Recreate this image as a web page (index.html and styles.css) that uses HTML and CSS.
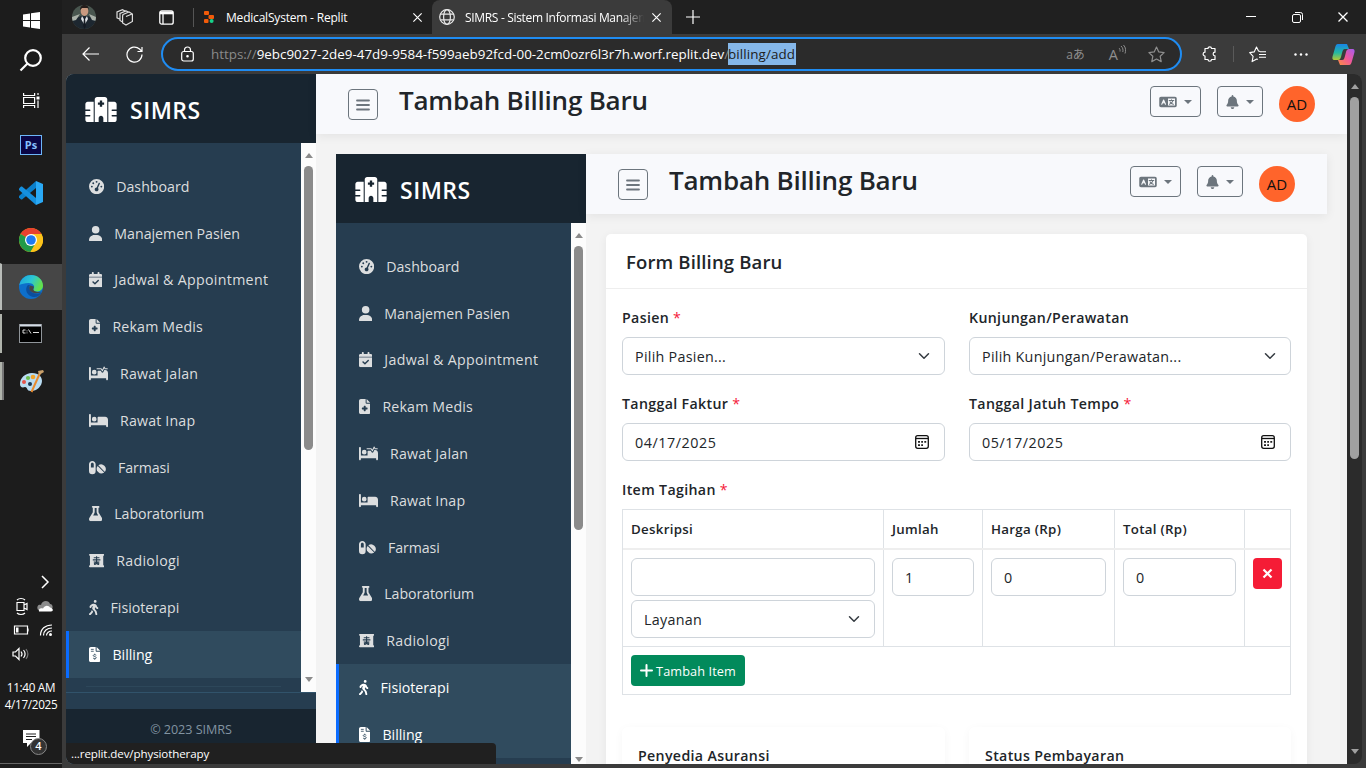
FILE: index.html
```html
<!DOCTYPE html>
<html lang="id">
<head>
<meta charset="utf-8">
<title>SIMRS - Sistem Informasi Manajemen</title>
<link rel="stylesheet" href="styles.css">
</head>
<body>
<svg class="sprite" aria-hidden="true">
  <symbol id="i-hospital" viewBox="0 0 640 512"><path fill-rule="evenodd" d="M192 48c0-26 22-48 48-48h160c26 0 48 22 48 48v464h-80v-80c0-26-22-48-48-48s-48 22-48 48v80h-80zM296 72v40h-40v48h40v40h48v-40h40v-48h-40V72zM48 96h122v416H48c-26 0-48-22-48-48v-64h88c22 0 22-32 0-32H0v-80h88c22 0 22-32 0-32H0V144c0-26 22-48 48-48zM470 96h122c26 0 48 22 48 48v112h-88c-22 0-22 32 0 32h88v80h-88c-22 0-22 32 0 32h88v64c0 26-22 48-48 48H470z"/></symbol>
  <symbol id="i-gauge" viewBox="0 0 512 512"><path fill-rule="evenodd" d="M0 256a256 256 0 1 1 512 0A256 256 0 1 1 0 256zM288 96a32 32 0 1 0 -64 0 32 32 0 1 0 64 0zM256 416c35.300 0 64-28.700 64-64c0-17.400-6.900-33.100-18.100-44.600L366 161.700c5.300-12.100-.2-26.300-12.300-31.600s-26.300 .2-31.600 12.300L257.900 288c-.6 0-1.300 0-1.900 0c-35.300 0-64 28.700-64 64s28.700 64 64 64zM176 144a32 32 0 1 0 -64 0 32 32 0 1 0 64 0zM96 288a32 32 0 1 0 0-64 32 32 0 1 0 0 64zm352-32a32 32 0 1 0 -64 0 32 32 0 1 0 64 0z"/></symbol>
  <symbol id="i-user" viewBox="0 0 448 512"><path d="M224 256A128 128 0 1 0 224 0a128 128 0 1 0 0 256zm-45.700 48C79.800 304 0 383.800 0 482.300C0 498.700 13.300 512 29.700 512H418.300c16.400 0 29.700-13.300 29.700-29.700C448 383.800 368.200 304 269.700 304H178.300z"/></symbol>
  <symbol id="i-calendar" viewBox="0 0 448 512"><path fill-rule="evenodd" d="M128 0c17.700 0 32 14.300 32 32V64H288V32c0-17.700 14.300-32 32-32s32 14.300 32 32V64h48c26.500 0 48 21.500 48 48v48H0V112C0 85.500 21.500 64 48 64H96V32c0-17.700 14.300-32 32-32zM0 192H448V464c0 26.500-21.500 48-48 48H48c-26.500 0-48-21.500-48-48V192zM329 305c9.400-9.400 9.400-24.600 0-33.900s-24.600-9.400-33.900 0l-95 95-47-47c-9.400-9.400-24.600-9.400-33.900 0s-9.400 24.600 0 33.900l64 64c9.400 9.400 24.600 9.400 33.900 0L329 305z"/><path d="M0 160h448v32H0z" opacity=".6"/></symbol>
  <symbol id="i-file" viewBox="0 0 384 512"><path fill-rule="evenodd" d="M64 0C28.700 0 0 28.700 0 64V448c0 35.300 28.700 64 64 64H320c35.300 0 64-28.700 64-64V160H256c-17.700 0-32-14.300-32-32V0H64zM256 0V128H384L256 0zM160 240c0-8.800 7.200-16 16-16h32c8.800 0 16 7.200 16 16v48h48c8.800 0 16 7.200 16 16v32c0 8.800-7.200 16-16 16H224v48c0 8.800-7.200 16-16 16H176c-8.800 0-16-7.200-16-16V352H112c-8.800 0-16-7.200-16-16V304c0-8.800 7.200-16 16-16h48V240z"/></symbol>
  <symbol id="i-bedpulse" viewBox="0 0 640 512"><path d="M32 32c18 0 32 14 32 32v256h224V180c0-12 10-20 22-20h90l26 48c10 20 42 22 54 0l38-72h26c53 0 96 43 96 96v216c0 18-14 32-32 32s-32-14-32-32v-32H64v32c0 18-14 32-32 32S0 466 0 448V64c0-18 14-32 32-32zm144 96a80 80 0 1 1 0 160 80 80 0 0 1 0-160z"/><path d="M270 96h140l42 64 58-124 30 60h76" fill="none" stroke="currentColor" stroke-width="34" stroke-linejoin="round" stroke-linecap="round"/></symbol>
  <symbol id="i-bed" viewBox="0 0 640 512"><path d="M32 32c17.700 0 32 14.300 32 32V320H288V160c0-17.700 14.300-32 32-32H544c53 0 96 43 96 96V448c0 17.700-14.300 32-32 32s-32-14.300-32-32V416H352 320 64v32c0 17.700-14.300 32-32 32s-32-14.300-32-32V64C0 46.300 14.300 32 32 32zm144 96a80 80 0 1 1 0 160 80 80 0 1 1 0-160z"/></symbol>
  <symbol id="i-pills" viewBox="0 0 576 512"><path fill-rule="evenodd" d="M112 32c62 0 112 50 112 112v224a112 112 0 0 1-224 0V144C0 82 50 32 112 32zm0 64c-27 0-48 21-48 48v112h96V144c0-27-21-48-48-48z"/><path d="M300 213c-5-5-13-5-17 1a160 160 0 0 0 219 219c6-4 6-12 1-17zM325 172c-6 4-6 12-1 17l203 203c5 5 13 4 17-2a160 160 0 0 0-219-218z"/></symbol>
  <symbol id="i-flask" viewBox="0 0 448 512"><path fill-rule="evenodd" d="M288 0H160 128C110.300 0 96 14.300 96 32s14.300 32 32 32V196.800c0 11.800-3.300 23.500-9.500 33.500L10.300 406.200C3.600 417.200 0 429.700 0 442.600C0 480.900 31.100 512 69.400 512H378.600c38.300 0 69.400-31.100 69.400-69.400c0-12.800-3.600-25.400-10.300-36.400L329.500 230.400c-6.200-10.100-9.500-21.700-9.500-33.500V64c17.700 0 32-14.300 32-32s-14.300-32-32-32H288zM192 196.800V64h64V196.800c0 23.700 6.600 46.900 19 67.100L309.500 320h-171L173 263.900c12.400-20.200 19-43.400 19-67.100z"/></symbol>
  <symbol id="i-xray" viewBox="0 0 512 512"><path d="M32 32h448c43 0 43 64 0 64v320c43 0 43 64 0 64H32c-43 0-43-64 0-64V96c-43 0-43-64 0-64z"/><path class="cut" d="M256 112v256M160 160h192M128 232h256M160 304h192M180 364c0-34 40-34 76-12 36-22 76-22 76 12 0 30-40 28-76-10-36 38-76 40-76 10z"/></symbol>
  <symbol id="i-walk" viewBox="0 0 320 512"><path d="M160 48a48 48 0 1 1 96 0 48 48 0 1 1 -96 0zM126.500 199.300c-1 .4-1.900 .8-2.900 1.200l-8 3.500c-16.400 7.300-29 21.200-34.700 38.200l-2.600 7.800c-5.600 16.800-23.700 25.800-40.500 20.200s-25.800-23.700-20.200-40.500l2.600-7.800c11.400-34.100 36.600-61.900 69.400-76.500l8-3.500c20.800-9.200 43.300-14 66.100-14c44.600 0 84.800 26.800 101.900 67.900L281 232.700l21.400 10.700c15.800 7.900 22.200 27.100 14.300 42.900s-27.100 22.200-42.900 14.300L247 287.300c-10.300-5.200-18.400-13.800-22.800-24.500l-9.600-23-19.300 65.500 49.500 54c5.400 5.900 9.200 13 11.200 20.800l23 92.100c4.300 17.100-6.100 34.500-23.300 38.800s-34.500-6.100-38.800-23.300l-22-88.100-70.700-77.100c-14.800-16.100-20.300-38.600-14.700-59.700l16.900-63.500zM68.700 398l25-62.400c2.100 3 4.500 5.800 7 8.600l40.700 44.400-14.500 36.200c-2.400 6-6 11.500-10.600 16.100L54.600 502.600c-12.500 12.500-32.800 12.500-45.300 0s-12.500-32.800 0-45.300L68.700 398z"/></symbol>
  <symbol id="i-invoice" viewBox="0 0 384 512"><path d="M64 0C29 0 0 29 0 64v384c0 35 29 64 64 64h256c35 0 64-29 64-64V160H256c-18 0-32-14-32-32V0zm192 0v128h128z"/><path class="cut thin" d="M64 80h96M64 144h96M246 278c-44-26-104-20-104 12 0 46 104 22 104 70 0 38-60 42-108 14M192 226v38M192 396v34"/></symbol>
  <symbol id="i-bell" viewBox="0 0 448 512"><path d="M224 0c-17.700 0-32 14.300-32 32V51.200C119 66 64 130.600 64 208v18.800c0 47-17.300 92.400-48.500 127.600l-7.400 8.300c-8.400 9.400-10.400 22.900-5.300 34.400S19.400 416 32 416H416c12.600 0 24-7.400 29.200-18.900s3.100-25-5.300-34.400l-7.400-8.300C401.300 319.200 384 273.900 384 226.800V208c0-77.400-55-142-128-156.800V32c0-17.700-14.300-32-32-32zm45.300 493.300c12-12 18.700-28.300 18.700-45.300H224 160c0 17 6.700 33.300 18.700 45.300s28.300 18.700 45.300 18.700s33.300-6.700 45.300-18.700z"/></symbol>
  <symbol id="i-lang" viewBox="0 0 640 512"><path fill-rule="evenodd" d="M64 64h512c35 0 64 29 64 64v256c0 35-29 64-64 64H64c-35 0-64-29-64-64V128c0-35 29-64 64-64zm256 64v256h256V128z"/><path d="M92 336l68-152 68 152M120 282h80" fill="none" stroke="#f8f9fc" stroke-width="40" stroke-linecap="round" stroke-linejoin="round"/><path d="M364 198h168M448 170v26M506 200c-20 68-68 116-128 142M398 252c24 42 64 74 116 90" fill="none" stroke="currentColor" stroke-width="38" stroke-linecap="round"/></symbol>
  <symbol id="i-bars" viewBox="0 0 14 14"><path d="M1 2.500h12M1 7h12M1 11.500h12" fill="none" stroke="currentColor" stroke-width="1.800" stroke-linecap="round"/></symbol>
  <symbol id="i-date" viewBox="0 0 16 16"><rect x="1.700" y="1.700" width="12.600" height="12.600" rx="2" fill="none" stroke="#111" stroke-width="1.300"/><path d="M2 4.500h12" stroke="#111" stroke-width="1.300"/><path d="M4 7h2v1.800H4zM7.200 7H9v1.800H7.200zM10.300 7h1.900v1.800h-1.900zM4 10.200h2V12H4zM7.200 10.200H9V12H7.200z" fill="#222"/></symbol>
  <symbol id="i-chev" viewBox="0 0 16 16"><path d="M2 5l6 6 6-6" fill="none" stroke="#343a40" stroke-width="2" stroke-linecap="round" stroke-linejoin="round"/></symbol>
  <symbol id="i-x" viewBox="0 0 12 12"><path d="M1.500 1.500l9 9M10.500 1.500l-9 9" fill="none" stroke="currentColor" stroke-width="1.300"/></symbol>
</svg>

<div class="screen">
  <aside class="taskbar">
    <div class="tb short"><svg width="17" height="17" viewBox="0 0 17 17" fill="#fff"><path d="M0 2.500l7-1V8H0zM8 1.300L17 0v8H8zM0 9h7v6.500l-7-1zM8 9h9v8l-9-1.300z"/></svg></div>
    <div class="tb short"><svg width="24" height="24" viewBox="0 0 24 24" fill="none" stroke="#fff" stroke-width="2.200"><circle cx="14" cy="10" r="7.800"/><path d="M8.500 15.500L1.500 22.500"/></svg></div>
    <div class="tb mid"><svg width="17" height="17" viewBox="0 0 17 17" fill="none" stroke="#fff" stroke-width="1.200"><path d="M.6 1v2.500h11V1M.6 16v-2.500h11V16M.6 5.500h11v6H.6zM15 1v2M15 8.500V16"/><path d="M13.500 4.500h3v3h-3z" fill="#fff" stroke="none"/></svg></div>
    <div class="tb pstb"><span class="ps">Ps</span></div>
    <div class="tb"><svg width="26" height="26" viewBox="0 0 26 26"><path fill-rule="evenodd" d="M18 1l7 3v18l-7 3z" fill="#2aa9f5"/><path d="M18 1v7L4 19.500H3l-2-2V16z" fill="#0a7fcb"/><path d="M18 25v-7L4 6.500H3l-2 2V10z" fill="#1590df"/></svg></div>
    <div class="tb"><svg width="24" height="24" viewBox="0 0 24 24"><circle cx="12" cy="12" r="12" fill="#fbbc05"/><path d="M12 12L1.600 6A12 12 0 0 1 22.400 6z" fill="#e8412f"/><path d="M12 12L1.600 6A12 12 0 0 0 11.500 24l5.200-9z" fill="#219a4a"/><path d="M12 6h10.400A12 12 0 0 1 11.500 24l5.500-9z" fill="#fcc31b"/><circle cx="12" cy="12" r="6" fill="#fff"/><circle cx="12" cy="12" r="4.800" fill="#1f7af0"/></svg></div>
    <div class="tb active"><svg width="24" height="24" viewBox="0 0 24 24"><defs><linearGradient id="eg" x1="0" y1="0" x2="1" y2=".4"><stop offset="0" stop-color="#1aa0df"/><stop offset=".55" stop-color="#2cc7d4"/><stop offset="1" stop-color="#63e04c"/></linearGradient></defs><circle cx="12" cy="12" r="12" fill="#0d6fcb"/><path d="M.3 10C2 3 7 0 12 0c7 0 12 5 12 10.500 0 4-3 6-6.500 6-3 0-4-1-3-2.500 2-3-.5-6-5-6-4 0-7 1-9.200 2z" fill="url(#eg)"/><path d="M9 10c-4 4-1 11 5 12 4 .5 6-1 8.500-4.500-4 2-8.500 1.500-11-1.500C10 14 9.500 12 11 10z" fill="#0b4f9e"/><path d="M11 10.500c-2 3 0 6.500 4 7.500 3 .7 6 0 7.800-1.200-3 .5-7 .5-8.300-1.800-.7-1.500.7-2 .3-3.500z" fill="#454545"/></svg></div>
    <div class="tb open"><svg width="24" height="20" viewBox="0 0 24 20"><rect x=".5" y=".5" width="22" height="18" fill="#000" stroke="#8f9499"/><path d="M1 1.500h21" stroke="#d3dbe4" stroke-width="2"/><path d="M6.500 6H4v3h2.500M8 6.500v.8M8 8.500v.8M9.500 5.500L12 9.500M14 8.500h6" stroke="#ddd" fill="none"/></svg></div>
    <div class="tb open dual"><svg width="25" height="25" viewBox="0 0 25 25"><path d="M1 15C1 9 6 4 13 4c7 0 10 4 10 8 0 5-5 10-11 10-5 0-3-4-6-4-3 1-5 0-5-3z" fill="#b9dcf2"/><circle cx="5" cy="13" r="2" fill="#e5544c"/><circle cx="9" cy="9" r="2.100" fill="#6bbf4f"/><circle cx="14" cy="8" r="2.300" fill="#f3a52b"/><circle cx="11" cy="15" r="2" fill="#1b3651"/><path d="M12.500 23L21 4" stroke="#e88a2d" stroke-width="2"/><path d="M20 6l-1-4 5-1 1 2z" fill="#c9a06b"/></svg></div>
    <div class="tray">
      <span></span><svg width="24" height="24" viewBox="0 0 24 24" fill="none" stroke="#fff" stroke-width="1.500"><path d="M9 6l6 6-6 6"/></svg>
      <svg width="24" height="24" viewBox="0 0 24 24" fill="none" stroke="#fff" stroke-width="1.200"><path d="M8 8.500h7v8H8zM15 11l3-1.500v6L15 14M8 6c2-2 6-2 8 0M8 19c2 2 6 2 8 0"/></svg>
      <svg width="24" height="24" viewBox="0 0 24 24"><path d="M5 16c-2-4 1-6 3-5 1-5 8-5 9-1 2 0 3 2 2.500 4z" fill="#8c8c8c"/><path d="M6 17.500c-1-3 2-4 4-3 2-4 6-3 7-1 3 0 4 4 1 4z" fill="#fff"/></svg>
      <svg width="24" height="24" viewBox="0 0 24 24" fill="none" stroke="#fff" stroke-width="1.200"><path d="M5.500 8h13v8h-13zM19 10.500v3"/><path d="M7 9.500h2.500v5H7z" fill="#fff" stroke="none"/></svg>
      <svg width="24" height="24" viewBox="0 0 24 24" fill="none" stroke="#fff" stroke-width="1.200"><path d="M7.500 17.500C7.500 11 12 7 19 7M10.500 17.500C10.500 13 14 10 19 10M13.500 17.500C13.500 15 16 13 19 13" /><circle cx="17.500" cy="16.500" r="1.500" fill="#fff" stroke="none"/></svg>
      <svg width="24" height="24" viewBox="0 0 24 24" fill="none" stroke="#fff" stroke-width="1.200"><path d="M4 10h2.500L10 6.500v11L6.500 14H4zM12 9.500c1.200 1.500 1.200 3.500 0 5M14.500 8c2 2.500 2 5.500 0 8"/><path d="M17 7c2.300 3 2.300 7 0 10" stroke="#777"/></svg>
    </div>
    <div class="clock"><div>11:40 AM</div><div>4/17/2025</div></div>
    <div class="notif"><svg width="17" height="18" viewBox="0 0 17 18"><path d="M0 0h16.500v13H8l-4 4v-4H0z" fill="#fff"/><path d="M3 4h10M3 6.500h10M3 9.500h6" stroke="#222"/></svg><span class="count">4</span></div>
  </aside>

  <div class="browser">
    <div class="tabstrip">
      <div class="cell c44"><svg width="24" height="24" viewBox="0 0 24 24"><defs><clipPath id="av"><circle cx="12" cy="12" r="12"/></clipPath></defs><g clip-path="url(#av)"><path d="M0 0h24v24H0z" fill="#49564f"/><path d="M0 15l9-4h7l8 4v9H0z" fill="#1d2730"/><path d="M0 12l8-3-4 6-4 1zM24 12l-7-3 3 6 4 1z" fill="#a9b0a8"/><ellipse cx="12.500" cy="6" rx="3.800" ry="5" fill="#c99a80"/><path d="M8 5c0-7 9-7 9 0l-1-2h-6z" fill="#241c1a"/><path d="M10 11l2.500 4 2.500-4 1 3-3.500 6L9 14z" fill="#dfe3e6"/><path d="M12 13h1l.8 8-1.200 3-1.400-3z" fill="#141a22"/></g></svg></div>
      <div class="cell c36"><svg width="17" height="17" viewBox="0 0 17 17" fill="none" stroke="#ddd" stroke-width="1.200"><path d="M7 5.500l6-2.500 3.400 2v7.500L10 16l-3.400-2V7zM10 7.500l6-2.500M6.500 13L4 11.500V4.500L10 2l2.500 1M3.500 10L1 8.800V3L6.500.7l3 1.500"/></svg></div>
      <div class="cell c48"><svg width="15" height="15" viewBox="0 0 15 15" fill="none" stroke="#fff" stroke-width="1.300"><rect x=".8" y=".8" width="13.400" height="13.400" rx="2"/><path d="M1 2.800h13" stroke-width="3"/><path d="M4 4v10"/></svg></div>
      <div class="vline"></div>
      <div class="tab one"><svg width="12" height="14" viewBox="0 0 12 14"><rect x="1" y="1" width="5" height="4" rx="1" fill="#f25b0a"/><rect x="5.500" y="5" width="5.500" height="4" rx="1" fill="#f25b0a"/><rect x="1" y="9" width="4.500" height="4" rx="1" fill="#f25b0a"/><circle cx="8.600" cy="11" r="2" fill="#17d18a"/></svg><span class="t1">MedicalSystem - Replit</span><svg class="close" width="11" height="11"><use href="#i-x"/></svg></div>
      <div class="tab two"><svg width="16" height="16" viewBox="0 0 16 16" fill="none" stroke="#e8e8e8" stroke-width="1.200"><circle cx="8" cy="8" r="7.300"/><ellipse cx="8" cy="8" rx="3.400" ry="7.300"/><path d="M1.500 5.200h13M1.500 10.800h13"/></svg><span class="t2">SIMRS - Sistem Informasi Manajem</span><svg class="close" width="11" height="11"><use href="#i-x"/></svg></div>
      <div class="cell c42"><svg width="14" height="14" viewBox="0 0 14 14" stroke="#fff" stroke-width="1.200"><path d="M7 0v14M0 7h14"/></svg></div>
      <div class="grow"></div>
      <div class="cell c46"><svg width="10" height="10" viewBox="0 0 10 10"><path d="M0 4.500h10" stroke="#fff"/></svg></div>
      <div class="cell c46"><svg width="11" height="11" viewBox="0 0 11 11" fill="none" stroke="#fff"><rect x=".5" y="2.500" width="8" height="8" rx="1.500"/><path d="M3 .5h5.500a2 2 0 0 1 2 2V8"/></svg></div>
      <div class="cell c46 white"><svg width="12" height="12"><use href="#i-x"/></svg></div>
    </div>
    <div class="toolbar">
      <div class="cell c56"><svg width="17" height="14" viewBox="0 0 17 14" fill="none" stroke="#fff" stroke-width="1.200"><path d="M7.500.5L1 7l6.500 6.500M1 7h16"/></svg></div>
      <div class="cell c32"><svg width="17" height="17" viewBox="0 0 17 17" fill="none" stroke="#fff" stroke-width="1.200"><path d="M16 8.500A7.500 7.500 0 1 1 13.500 3l2 2M16 1v4.500h-4.500"/></svg></div>
      <div class="address">
        <svg width="13" height="16" viewBox="0 0 13 16" fill="none" stroke="#fff" stroke-width="1.200"><rect x=".7" y="5.500" width="11.600" height="9.500" rx="2"/><path d="M3.500 5.500V4a3 3 0 0 1 6 0v1.500"/><circle cx="6.500" cy="10.200" r=".7" fill="#fff"/></svg>
        <span class="url"><i>https://</i>9ebc9027-2de9-47d9-9584-f599aeb92fcd-00-2cm0ozr6l3r7h.worf.replit.dev<i>/</i></span><span class="sel">billing/add</span>
        <span class="grow"></span>
        <span class="aa">aあ</span>
        <span class="read"><span>A</span><svg width="8" height="10" viewBox="0 0 8 10" fill="none" stroke="#8e8e8e"><path d="M1 3c1 1 1.200 2 1 3.500M3 1c2 1.800 2.300 4 1.800 6M5.500 0C8 2.500 8 6 7 8.500"/></svg></span>
        <svg width="17" height="17" viewBox="0 0 17 17" fill="none" stroke="#8e8e8e" stroke-width="1.200"><path d="M8.500 1l2.300 4.900 5.300.7-3.900 3.700 1 5.300-4.700-2.600-4.700 2.600 1-5.300L.9 6.600l5.300-.7z" stroke-linejoin="round"/></svg>
      </div>
      <div class="cell c54"><svg width="15" height="16" viewBox="0 0 15 16" fill="none" stroke="#fff" stroke-width="1.200"><path d="M3 2.500h3c0-2.300 3.500-2.300 3.500 0H13v3.700c-2.500 0-2.500 3.600 0 3.600v3.700H9.500c0 2.300-3.500 2.300-3.500 0H3v-3.500c-2.500 0-2.500-3.800 0-3.800V2.500z" stroke-linejoin="round"/></svg></div>
      <div class="vbar"></div>
      <div class="cell c46"><svg width="17" height="17" viewBox="0 0 17 17" fill="none" stroke="#fff" stroke-width="1.100"><path d="M11 5.500L9.500 5 7.500 1 5.200 5.900.7 6.600l3.400 3.700-1 5.300 4.700-2.600 1 .5M10 8.500h7M10 11.200h7M11 5.800h6" stroke-linejoin="round"/></svg></div>
      <div class="cell c42"><svg width="14" height="3" viewBox="0 0 14 3" fill="#fff"><circle cx="1.500" cy="1.500" r="1.200"/><circle cx="7" cy="1.500" r="1.200"/><circle cx="12.500" cy="1.500" r="1.200"/></svg></div>
      <div class="cell c42"><svg width="23" height="21" viewBox="0 0 23 21"><defs><linearGradient id="ca" x1="0" y1="0" x2="0" y2="1"><stop offset="0" stop-color="#1785e8"/><stop offset=".55" stop-color="#25b9a0"/><stop offset="1" stop-color="#b5c935"/></linearGradient><linearGradient id="cb" x1="1" y1="0" x2="0" y2="1"><stop offset="0" stop-color="#a35cf0"/><stop offset=".5" stop-color="#f0579b"/><stop offset="1" stop-color="#fb8f3f"/></linearGradient></defs><path d="M6 0h9l2 5h-4c-2 0-2 1-3 4l-1 4c-1 3-2 3-4 3H3c-3 0-3-2-2-5L3 4c.6-2 1-4 3-4z" fill="url(#ca)"/><path d="M17 21H8l-2-5h4c2 0 2-1 3-4l1-4c1-3 2-3 4-3h2c3 0 3 2 2 5l-2 7c-.6 2-1 4-3 4z" fill="url(#cb)"/></svg></div>
    </div>

    <div class="viewport">
      <div class="page">
        <nav class="sidebar">
          <div class="brand"><svg width="32" height="25"><use href="#i-hospital"/></svg><span>SIMRS</span></div>
          <div class="navwrap">
            <div class="nav">
              <a><svg class="ic w16"><use href="#i-gauge"/></svg><span>Dashboard</span></a>
              <a><svg class="ic w14"><use href="#i-user"/></svg><span>Manajemen Pasien</span></a>
              <a><svg class="ic w14"><use href="#i-calendar"/></svg><span class="wide">Jadwal &amp; Appointment</span></a>
              <a><svg class="ic w12"><use href="#i-file"/></svg><span class="semi">Rekam Medis</span></a>
              <a><svg class="ic w20"><use href="#i-bedpulse"/></svg><span class="semi">Rawat Jalan</span></a>
              <a><svg class="ic w20"><use href="#i-bed"/></svg><span class="semi">Rawat Inap</span></a>
              <a><svg class="ic w18"><use href="#i-pills"/></svg><span class="snug">Farmasi</span></a>
              <a><svg class="ic w14"><use href="#i-flask"/></svg><span class="snug">Laboratorium</span></a>
              <a><svg class="ic w16"><use href="#i-xray"/></svg><span class="wide">Radiologi</span></a>
              <a><svg class="ic w10"><use href="#i-walk"/></svg><span>Fisioterapi</span></a>
              <a class="on"><svg class="ic w12"><use href="#i-invoice"/></svg><span>Billing</span></a>
              <div class="rule"></div>
            </div>
            <div class="scroll"><i class="up"></i><b></b><i class="down"></i></div>
          </div>
          <div class="gap"></div>
          <div class="foot">© 2023 SIMRS</div>
        </nav>
        <main class="content">
          <header class="topbar">
            <button class="menu"><svg width="14" height="14"><use href="#i-bars"/></svg></button>
            <h1>Tambah Billing Baru</h1>
            <button class="drop"><svg width="18" height="14"><use href="#i-lang"/></svg><em></em></button>
            <button class="drop bell"><svg width="13" height="14"><use href="#i-bell"/></svg><em></em></button>
            <div class="avatar">AD</div>
          </header>
          <div class="inner">
            <nav class="sidebar">
              <div class="brand"><svg width="32" height="25"><use href="#i-hospital"/></svg><span>SIMRS</span></div>
              <div class="navwrap tall">
                <div class="nav">
                  <a><svg class="ic w16"><use href="#i-gauge"/></svg><span>Dashboard</span></a>
                  <a><svg class="ic w14"><use href="#i-user"/></svg><span>Manajemen Pasien</span></a>
                  <a><svg class="ic w14"><use href="#i-calendar"/></svg><span class="wide">Jadwal &amp; Appointment</span></a>
                  <a><svg class="ic w12"><use href="#i-file"/></svg><span class="semi">Rekam Medis</span></a>
                  <a><svg class="ic w20"><use href="#i-bedpulse"/></svg><span class="semi">Rawat Jalan</span></a>
                  <a><svg class="ic w20"><use href="#i-bed"/></svg><span class="semi">Rawat Inap</span></a>
                  <a><svg class="ic w18"><use href="#i-pills"/></svg><span class="snug">Farmasi</span></a>
                  <a><svg class="ic w14"><use href="#i-flask"/></svg><span class="snug">Laboratorium</span></a>
                  <a><svg class="ic w16"><use href="#i-xray"/></svg><span class="wide">Radiologi</span></a>
                  <a class="on"><svg class="ic w10"><use href="#i-walk"/></svg><span>Fisioterapi</span></a>
                  <a class="on"><svg class="ic w12"><use href="#i-invoice"/></svg><span>Billing</span></a>
                </div>
                <div class="scroll"><i class="up"></i><b></b><i class="down"></i></div>
              </div>
            </nav>
            <section class="content">
              <header class="topbar">
                <button class="menu"><svg width="14" height="14"><use href="#i-bars"/></svg></button>
                <h1>Tambah Billing Baru</h1>
                <button class="drop"><svg width="18" height="14"><use href="#i-lang"/></svg><em></em></button>
                <button class="drop bell"><svg width="13" height="14"><use href="#i-bell"/></svg><em></em></button>
                <div class="avatar">AD</div>
              </header>
              <div class="card">
                <h2>Form Billing Baru</h2>
                <div class="cardbody">
                  <div class="fields">
                    <div><label>Pasien <u>*</u></label><div class="ctl">Pilih Pasien...<svg width="12" height="12"><use href="#i-chev"/></svg></div></div>
                    <div><label>Kunjungan/Perawatan</label><div class="ctl">Pilih Kunjungan/Perawatan...<svg width="12" height="12"><use href="#i-chev"/></svg></div></div>
                    <div><label>Tanggal Faktur <u>*</u></label><div class="ctl num">04/17/2025<svg width="16" height="16"><use href="#i-date"/></svg></div></div>
                    <div><label>Tanggal Jatuh Tempo <u>*</u></label><div class="ctl num">05/17/2025<svg width="16" height="16"><use href="#i-date"/></svg></div></div>
                  </div>
                  <label>Item Tagihan <u>*</u></label>
                  <div class="items">
                    <div class="row head"><div>Deskripsi</div><div>Jumlah</div><div>Harga (Rp)</div><div>Total (Rp)</div><div></div></div>
                    <div class="row entry">
                      <div><div class="ctl"></div><div class="ctl lay">Layanan<svg width="12" height="12"><use href="#i-chev"/></svg></div></div>
                      <div><div class="ctl">1</div></div>
                      <div><div class="ctl">0</div></div>
                      <div><div class="ctl">0</div></div>
                      <div><button class="del"><svg width="11" height="11" viewBox="0 0 11 11"><path d="M1.500 1.500l8 8M9.500 1.500l-8 8" stroke="#fff" stroke-width="2.200"/></svg></button></div>
                    </div>
                    <div class="addrow"><button class="add"><svg width="13" height="13" viewBox="0 0 13 13"><path d="M6.500 1v11M1 6.500h11" stroke="#fff" stroke-width="2" stroke-linecap="round"/></svg>Tambah Item</button></div>
                  </div>
                  <div class="fields subs"><div class="sub">Penyedia Asuransi</div><div class="sub">Status Pembayaran</div></div>
                </div>
              </div>
            </section>
          </div>
        </main>
      </div>
      <div class="scroll outer"><i class="up"></i><b></b><i class="down"></i></div>
      <div class="status">...replit.dev/physiotherapy</div>
    </div>
  </div>
</div>
</body>
</html>
```
FILE: styles.css
```css
* { box-sizing: border-box; }
body { margin: 0; background: #3b3b3b; font-family: "Open Sans", "Noto Sans", sans-serif; overflow: hidden; }
svg { display: block; flex: none; }
svg:not([fill]) { fill: currentColor; }
button { font: inherit; padding: 0; background: none; }
.sprite { position: absolute; width: 0; height: 0; }
.screen { display: flex; width: 1366px; height: 768px; overflow: hidden; }
.grow { flex: 1; }

/* taskbar */
.taskbar { width: 62px; height: 768px; background: #1c1c1c; display: flex; flex-direction: column; color: #fff; flex: none; }
.tb { height: 47px; display: flex; align-items: center; justify-content: center; }
.tb.short { height: 40px; }
.tb.mid { height: 41px; }
.tb.pstb { height: 48px; padding-bottom: 1px; }
.tb.active { background: #464646; border-left: 2px solid #b9bdb9; border-top: 1px solid #1c1c1c; padding-right: 2px; }
.tb.open { background: linear-gradient(#b0b4ac, #b0b4ac) 0 50% / 2px 39px no-repeat; }
.tb.dual { background-size: 4px 38px; background-image: linear-gradient(90deg, #b0b4ac 0 2px, #777 2px 4px); padding-top: 2px; }
.ps { width: 22px; height: 20px; border: 1px solid #6db6f8; background: #0a0645; color: #86c1ff; font-size: 11px; font-weight: 700; line-height: 17px; text-align: center; }
.tray { margin-top: auto; padding-left: 9px; display: grid; grid-template-columns: 24px 24px; }
.clock { height: 45px; padding-top: 13px; font-size: 11.700px; line-height: 16.500px; text-align: center; letter-spacing: -.3px; white-space: nowrap; }
.notif { position: relative; padding: 19px 0 0 23px; border-bottom: 1px solid #666; height: 53px; margin-bottom: 4px; }
.count { position: absolute; left: 30px; top: 27px; width: 17px; height: 17px; border-radius: 50%; border: 1px solid #888; background: #333; font-size: 11px; line-height: 14px; font-weight: 600; text-align: center; }

/* browser frame */
.browser { flex: 1; display: flex; flex-direction: column; }
.tabstrip { height: 34px; background: #202020; display: flex; align-items: stretch; }
.cell { display: flex; align-items: center; justify-content: center; flex: none; }
.white { color: #fff; }
.c32 { width: 32px; } .c36 { width: 36px; } .c42 { width: 42px; } .c44 { width: 44px; } .c46 { width: 46px; } .c48 { width: 48px; } .c54 { width: 54px; } .c56 { width: 56px; }
.vline { width: 1px; background: #555; margin: 8px 3px 7px 3px; }
.tab { display: flex; align-items: center; font-size: 12px; letter-spacing: -.2px; white-space: nowrap; color: #fff; flex: none; }
.one { width: 235px; padding-left: 6px; }
.two { width: 240px; padding-left: 7px; background: #3b3b3b; border-radius: 8px 8px 0 0; }
.t1 { margin-left: 11px; }
.t2 { margin-left: 10px; letter-spacing: -.32px; width: 182px; mask-image: linear-gradient(90deg, #000 155px, transparent 179px); }
.close { margin-left: auto; margin-right: 9px; flex: none; }
.two .close { margin-right: 10px; }
.toolbar { height: 40px; background: #3b3b3b; display: flex; align-items: center; }
.toolbar > .c32 { margin-right: 11px; }
.address { width: 1021px; height: 34px; border: 2px solid #1f8cf2; border-radius: 17px; background: #2b2b2b; display: flex; align-items: center; padding: 0 15px 0 18px; color: #fff; font-size: 13.400px; white-space: nowrap; flex: none; }
.url { margin-left: 17px; width: 517px; flex: none; }
.url i { font-style: normal; color: #8a8a8a; }
.sel { width: 68px; height: 22px; line-height: 22px; background: #85b7e9; color: #202020; letter-spacing: .1px; flex: none; }
.aa { color: #8e8e8e; font: 12px "Open Sans", "Noto Sans CJK JP", sans-serif; }
.read { display: flex; color: #8e8e8e; margin: 0 22px 0 24px; font-size: 14.500px; }
.vbar { width: 1px; height: 16px; background: #5a5a5a; margin-left: -3px; }

/* page viewport */
.viewport { position: relative; margin: 0 4px; height: 690px; display: flex; border-radius: 8px 8px 0 8px; overflow: hidden; }
.page { width: 1281px; height: 690px; display: flex; background: #f3f3f3; overflow: hidden; }
.status { position: absolute; left: 0; top: 669px; width: 430px; height: 21px; background: #202020; color: #fff; font-size: 11.600px; line-height: 21px; padding-left: 5px; border-radius: 0 4px 0 8px; letter-spacing: -.12px; }

/* sidebar */
.sidebar { width: 250px; flex: none; background: #263d50; --bg: #263d50; }
.brand { height: 69px; background: #182530; display: flex; align-items: center; padding: 2px 0 0 19px; gap: 13px; color: #fff; font-size: 23px; letter-spacing: .5px; font-weight: 600; }
.navwrap { display: flex; height: 549px; overflow: hidden; }
.navwrap.tall { height: 541px; }
.nav { width: 235px; padding-top: 20px; color: #dcdedf; }
.nav a { display: flex; align-items: center; height: 46.800px; border-left: 3px solid transparent; padding-left: 20px; font-size: 14.200px; white-space: nowrap; }
.nav span { margin-left: 12px; }
.nav .wide { letter-spacing: .32px; }
.nav .semi { letter-spacing: .18px; }
.nav .snug { letter-spacing: -.1px; }
.nav a.on { background: #304b5e; border-left-color: #0a6cff; color: #fff; --bg: #304b5e; }
.ic { height: 15.200px; }
.w10 { width: 9.500px; } .w12 { width: 11.400px; } .w14 { width: 13.300px; } .w16 { width: 15.200px; } .w18 { width: 17.100px; } .w20 { width: 19px; }
.cut { fill: none; stroke: var(--bg); stroke-width: 36; }
.cut.thin { stroke-width: 28; }
.rule { height: 1px; background: #2d475a; margin: 8px 20px; }
.gap { height: 17px; border-top: 1px solid #31536b; }
.foot { height: 60px; background: #182530; color: #8294a1; font-size: 12.600px; line-height: 41px; text-align: center; letter-spacing: -.05px; }

/* scroll tracks */
.scroll { width: 15px; background: #fcfcfc; display: flex; flex-direction: column; align-items: center; flex: none; padding: 10px 0 10px; color: #8b8b8b; }
.scroll b { width: 9px; height: 284px; border-radius: 5px; background: #8b8b8b; margin-top: 8px; }
.up, .down { border: 4.500px solid transparent; }
.up { border-top: 0; border-bottom: 5px solid currentColor; }
.down { border-bottom: 0; border-top: 5px solid currentColor; margin-top: auto; }
.tall .scroll { padding-bottom: 2px; }
.outer { background: #2b2b2b; color: #a0a0a0; border-radius: 0 8px 8px 0; }
.outer b { height: 362px; background: #a0a0a0; }

/* main column */
.content { flex: 1; min-width: 0; }
.topbar { height: 60px; background: #f8f9fc; box-shadow: 0 2px 10px rgba(0,0,0,.07); display: flex; align-items: flex-start; padding: 12px 32px 0; position: relative; }
.menu { width: 30px; height: 31px; margin-top: 3px; border: 1px solid #6c757d; border-radius: 4px; color: #6c757d; display: flex; align-items: center; justify-content: center; }
h1 { margin: -4px auto 0 21px; font-size: 26px; line-height: 37px; font-weight: 600; letter-spacing: -.22px; color: #212529; white-space: nowrap; }
.drop { width: 51px; height: 31px; border: 1px solid #6c757d; border-radius: 4px; color: #6c757d; display: flex; align-items: center; justify-content: center; gap: 7px; margin-right: 16px; }
.bell { width: 46px; }
.drop em { border: 4px solid transparent; border-top-color: currentColor; border-bottom: 0; }
.avatar { width: 36px; height: 36px; border-radius: 50%; background: #ff642b; color: #111; font-size: 15px; line-height: 37px; text-align: center; }
.inner { display: flex; margin: 20px; width: 991px; height: 800px; }

/* form */
.card { margin: 20px; background: #fff; border-radius: 5px; box-shadow: 0 2px 10px rgba(0,0,0,.06); color: #212529; height: 720px; }
h2 { margin: 0; height: 55px; border-bottom: 1px solid #eee; font-size: 18.500px; line-height: 55px; font-weight: 600; letter-spacing: .15px; padding-left: 20px; }
.cardbody { padding: 17px 16px; }
.fields { display: grid; grid-template-columns: 323px 322px; column-gap: 24px; }
.fields > div { height: 86px; }
label { display: block; font-size: 14.200px; line-height: 23px; height: 31px; font-weight: 600; letter-spacing: .34px; white-space: nowrap; }
label u { color: #f5183a; text-decoration: none; font-weight: 400; }
.ctl { height: 38px; border: 1px solid #ced4da; border-radius: 6px; display: flex; align-items: center; justify-content: space-between; padding: 0 14px 0 12px; font-size: 14.300px; letter-spacing: .28px; background: #fff; white-space: nowrap; }
.num { letter-spacing: .55px; }
.items { border: 1px solid #dee2e6; height: 186px; }
.row { display: grid; grid-template-columns: 261px 99px 132px 130px 45px; }
.row > div { border-right: 1px solid #dee2e6; padding: 0 8px; }
.row > div:last-child { border-right: 0; }
.head { height: 40px; line-height: 38px; font-size: 13.300px; font-weight: 600; letter-spacing: .3px; border-bottom: 2px solid #eee; white-space: nowrap; }
.entry { height: 97px; border-bottom: 1px solid #dee2e6; }
.entry > div { padding: 8px; }
.lay { margin-top: 4px; }
.del { width: 29px; height: 31px; border: 0; border-radius: 4px; background: #f51c36; display: flex; align-items: center; justify-content: center; }
.addrow { padding: 8px; }
.add { width: 114px; height: 31px; border: 0; border-radius: 4px; background: #028a5b; color: #fff; font-size: 12.700px; letter-spacing: .12px; display: flex; align-items: center; justify-content: center; gap: 3px; white-space: nowrap; }
.subs { margin-top: 32px; }
.fields > .sub { height: 120px; border-radius: 6px; box-shadow: 0 2px 10px rgba(0,0,0,.04); padding: 18px 16px; font-size: 14.200px; line-height: 22px; font-weight: 600; letter-spacing: .34px; }
```
